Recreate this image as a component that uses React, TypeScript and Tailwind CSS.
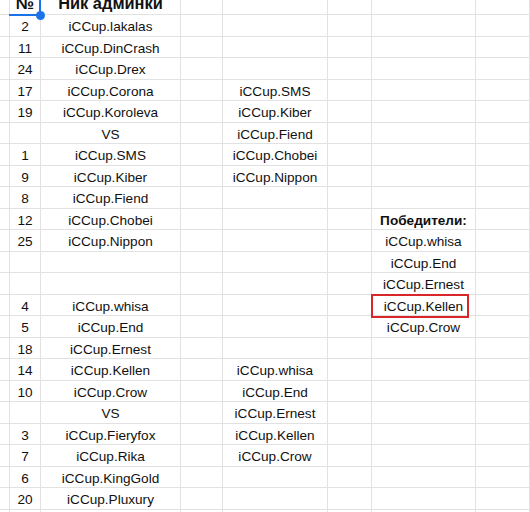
import React from "react";

type Row = [string, string, string, string];

const rows: Row[] = [
  ["2", "iCCup.lakalas", "", ""],
  ["11", "iCCup.DinCrash", "", ""],
  ["24", "iCCup.Drex", "", ""],
  ["17", "iCCup.Corona", "iCCup.SMS", ""],
  ["19", "iCCup.Koroleva", "iCCup.Kiber", ""],
  ["", "VS", "iCCup.Fiend", ""],
  ["1", "iCCup.SMS", "iCCup.Chobei", ""],
  ["9", "iCCup.Kiber", "iCCup.Nippon", ""],
  ["8", "iCCup.Fiend", "", ""],
  ["12", "iCCup.Chobei", "", "Победители:"],
  ["25", "iCCup.Nippon", "", "iCCup.whisa"],
  ["", "", "", "iCCup.End"],
  ["", "", "", "iCCup.Ernest"],
  ["4", "iCCup.whisa", "", "iCCup.Kellen"],
  ["5", "iCCup.End", "", "iCCup.Crow"],
  ["18", "iCCup.Ernest", "", ""],
  ["14", "iCCup.Kellen", "iCCup.whisa", ""],
  ["10", "iCCup.Crow", "iCCup.End", ""],
  ["", "VS", "iCCup.Ernest", ""],
  ["3", "iCCup.Fieryfox", "iCCup.Kellen", ""],
  ["7", "iCCup.Rika", "iCCup.Crow", ""],
  ["6", "iCCup.KingGold", "", ""],
  ["20", "iCCup.Pluxury", "", ""],
  ["", "", "", ""],
];

const cell =
  "border-r border-b border-[#e2e2e2] box-border text-center whitespace-nowrap overflow-visible pt-[2px] leading-[19.5px] text-[13.6px] text-[#111]";

export default function App() {
  return (
    <div
      className="w-[530px] h-[512px] overflow-hidden bg-white"
      style={{ fontFamily: '"Liberation Sans", Arial, sans-serif' }}
    >
      <div className="grid grid-cols-[10px_31px_140px_42px_105px_44px_104px_1fr] auto-rows-[21.5px] mt-[-6.5px]">
        {/* header row */}
        <div className={cell}></div>
        <div className="relative border-r border-b border-[#e2e2e2] box-border text-center font-bold text-[16.4px] leading-[18.5px] text-[#111]">
          №
          <div className="absolute left-[-1px] right-[-1px] bottom-[-2px] h-[2px] bg-[#1a73e8]" />
          <div className="absolute top-0 right-[-1px] bottom-[-2px] w-[2px] bg-[#1a73e8]" />
          <div className="absolute right-[-5px] bottom-[-5.5px] w-[9px] h-[9px] rounded-full bg-[#1a73e8]" />
        </div>
        <div className="border-r border-b border-[#e2e2e2] box-border text-center font-bold text-[16.4px] leading-[18.5px] text-[#111] whitespace-nowrap">
          Ник админки
        </div>
        <div className={cell}></div>
        <div className={cell}></div>
        <div className={cell}></div>
        <div className={cell}></div>
        <div className={cell}></div>

        {rows.map((r, i) => (
          <React.Fragment key={i}>
            <div className={cell}></div>
            <div className={cell}>{r[0]}</div>
            <div className={cell}>{r[1]}</div>
            <div className={cell}></div>
            <div className={cell}>{r[2]}</div>
            <div className={cell}></div>
            <div className={`${cell} relative ${r[3] === "Победители:" ? "font-bold" : ""}`}>
              {r[3]}
              {r[3] === "iCCup.Kellen" && (
                <div className="absolute left-[-1px] top-[-1px] w-[98px] h-[24px] border-2 border-[#d9262a]" />
              )}
            </div>
            <div className={cell}></div>
          </React.Fragment>
        ))}
      </div>
    </div>
  );
}
